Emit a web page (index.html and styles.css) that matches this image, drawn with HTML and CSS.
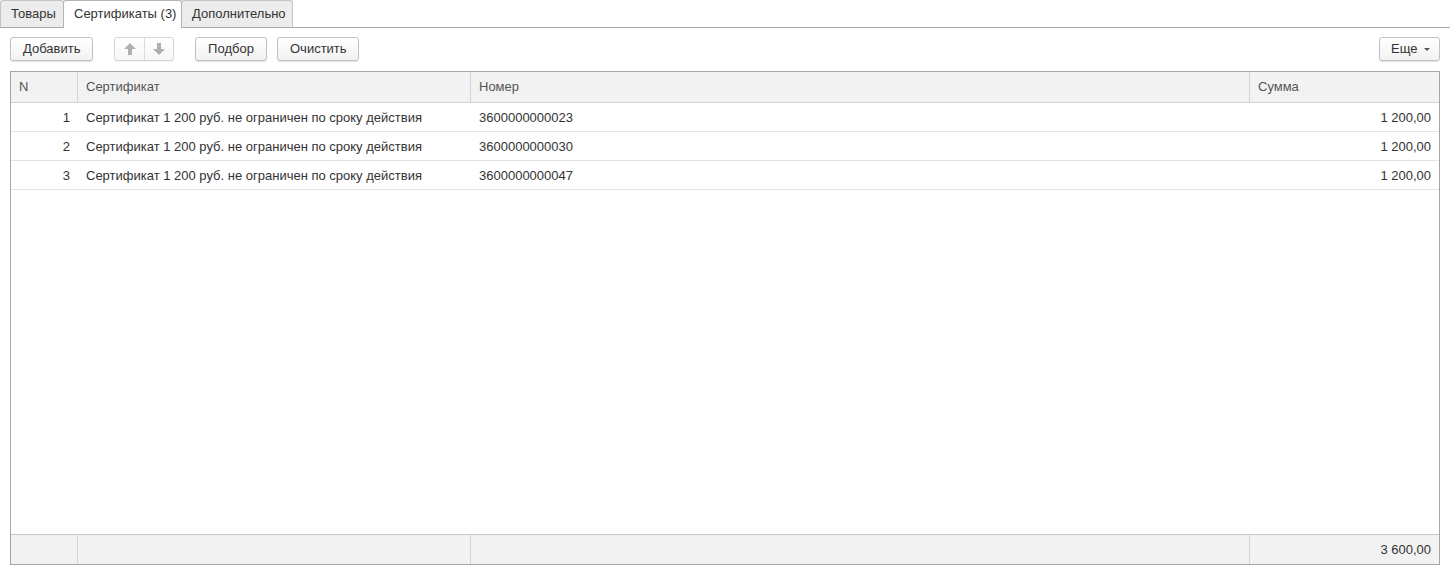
FILE: index.html
```html
<!DOCTYPE html>
<html lang="ru">
<head>
<meta charset="utf-8">
<link rel="stylesheet" href="styles.css">
</head>
<body>
<div class="tabs">
  <div class="tab tab-goods">Товары</div>
  <div class="tab tab-cert active">Сертификаты (3)</div>
  <div class="tab tab-extra">Дополнительно</div>
</div>
<div class="toolbar">
  <button class="btn btn-add">Добавить</button>
  <div class="group">
    <span class="arrow"><svg width="14" height="14" viewBox="0 0 14 14"><path d="M7 1 L13 7 L9 7 L9 13 L5 13 L5 7 L1 7 Z" fill="#b0b0b0"/></svg></span>
    <span class="arrow"><svg width="14" height="14" viewBox="0 0 14 14"><path d="M7 13 L13 7 L9 7 L9 1 L5 1 L5 7 L1 7 Z" fill="#b0b0b0"/></svg></span>
  </div>
  <button class="btn btn-pick">Подбор</button>
  <button class="btn btn-clear">Очистить</button>
  <div class="spacer"></div>
  <button class="btn btn-more">Еще <span class="caret"></span></button>
</div>
<div class="table">
  <div class="row head">
    <div class="c c-n">N</div>
    <div class="c c-cert">Сертификат</div>
    <div class="c c-num">Номер</div>
    <div class="c c-sum">Сумма</div>
  </div>
  <div class="body">
    <div class="row">
      <div class="c c-n r">1</div>
      <div class="c c-cert">Сертификат 1 200 руб. не ограничен по сроку действия</div>
      <div class="c c-num">3600000000023</div>
      <div class="c c-sum r">1 200,00</div>
    </div>
    <div class="row">
      <div class="c c-n r">2</div>
      <div class="c c-cert">Сертификат 1 200 руб. не ограничен по сроку действия</div>
      <div class="c c-num">3600000000030</div>
      <div class="c c-sum r">1 200,00</div>
    </div>
    <div class="row">
      <div class="c c-n r">3</div>
      <div class="c c-cert">Сертификат 1 200 руб. не ограничен по сроку действия</div>
      <div class="c c-num">3600000000047</div>
      <div class="c c-sum r">1 200,00</div>
    </div>
  </div>
  <div class="row foot">
    <div class="c c-n"></div>
    <div class="c c-cert"></div>
    <div class="c c-num"></div>
    <div class="c c-sum r">3 600,00</div>
  </div>
</div>
</body>
</html>
```
FILE: styles.css
```css
* { box-sizing: border-box; }
html, body { margin: 0; padding: 0; background: #fff; }
body {
  font-family: "Liberation Sans", Arial, sans-serif;
  font-size: 13px;
  color: #333;
  width: 1450px;
  height: 575px;
  overflow: hidden;
}
.tabs {
  display: flex;
  height: 28px;
  border-bottom: 1px solid #a9a9a9;
  align-items: flex-end;
}
.tab {
  height: 27px;
  line-height: 26px;
  padding: 0 0 0 10px;
  background: #ececec;
  border: 1px solid #c4c4c4;
  border-bottom: none;
  border-radius: 3px 3px 0 0;
  margin-right: -1px;
  color: #333;
  position: relative;
  white-space: nowrap;
  overflow: hidden;
}
.tab-goods { width: 64px; }
.tab-cert { width: 119px; }
.tab-extra { width: 112px; }
.tab.active {
  background: #fff;
  height: 28px;
  margin-bottom: -1px;
  z-index: 1;
  border-color: #b4b4b4;
}
.toolbar {
  display: flex;
  align-items: flex-start;
  padding: 9px 10px 0 10px;
  height: 43px;
}
.btn {
  font: inherit;
  color: #333;
  height: 24px;
  padding: 0 12px;
  border: 1px solid #c2c2c2;
  border-radius: 3px;
  background: linear-gradient(#ffffff, #f2f2f2);
  box-shadow: 0 1px 1px rgba(0,0,0,0.12);
  line-height: 22px;
  margin: 0;
  white-space: nowrap;
}
.btn-add { width: 83px; }
.group {
  margin-left: 21px;
  display: flex;
  height: 24px;
  border: 1px solid #d6d6d6;
  border-radius: 3px;
  background: linear-gradient(#ffffff, #f6f6f6);
  box-shadow: 0 1px 1px rgba(0,0,0,0.06);
}
.arrow {
  width: 29px;
  display: flex;
  align-items: center;
  justify-content: center;
}
.arrow + .arrow { border-left: 1px solid #dcdcdc; }
.btn-pick { margin-left: 21px; width: 72px; }
.btn-clear { margin-left: 10px; width: 82px; }
.spacer { flex: 1; }
.btn-more { width: 61px; padding: 0 0 0 11px; text-align: left; }
.caret {
  display: inline-block;
  width: 0; height: 0;
  border-left: 3px solid transparent;
  border-right: 3px solid transparent;
  border-top: 3px solid #555;
  vertical-align: middle;
  margin-left: 3px;
}
.table {
  margin: 0 10px;
  height: 494px;
  border: 1px solid #a5a5a5;
  display: flex;
  flex-direction: column;
}
.row {
  display: flex;
  height: 29px;
  border-bottom: 1px solid #e3e3e3;
  line-height: 29px;
}
.c { padding: 0 8px; white-space: nowrap; overflow: hidden; }
.c-n { width: 67px; }
.c-cert { width: 393px; }
.c-num { width: 779px; }
.c-sum { flex: 1; }
.r { text-align: right; }
.head {
  height: 31px;
  background: #f2f2f2;
  border-bottom: 1px solid #d2d2d2;
  color: #555;
  line-height: 29px;
}
.head .c, .foot .c { border-right: 1px solid #d4d4d4; }
.head .c:last-child, .foot .c:last-child { border-right: none; }
.body { flex: 1; }
.foot {
  height: 30px;
  background: #f2f2f2;
  border-top: 1px solid #c8c8c8;
  border-bottom: none;
  line-height: 30px;
}
```
